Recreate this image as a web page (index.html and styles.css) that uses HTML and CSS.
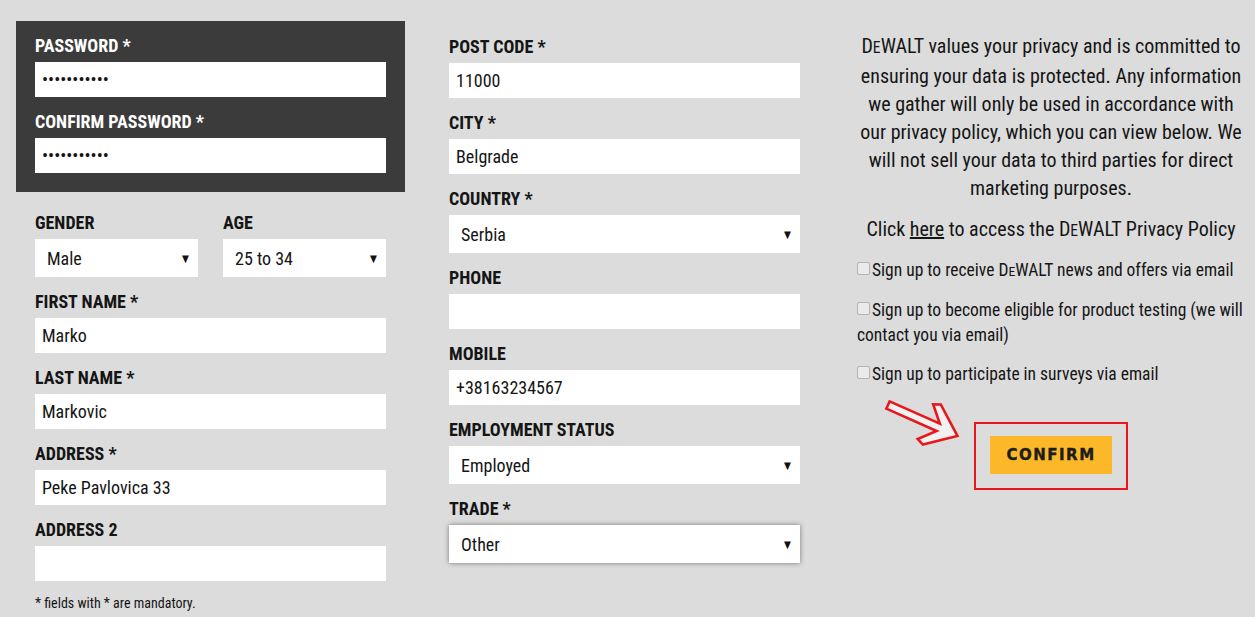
FILE: index.html
```html
<!DOCTYPE html>
<html lang="en">

<head>
    <meta charset="UTF-8">
    <meta name="viewport" content="width=device-width, initial-scale=1.0">
    <title>DEWALT Registration</title>
    <link rel="stylesheet" href="styles.css">
</head>

<body>
    <div class="page">
        <div class="col col-left">
            <div class="secure">
                <div class="field">
                    <label class="label">PASSWORD *</label>
                    <input class="text" type="password" value="marko123456">
                </div>
                <div class="field">
                    <label class="label">CONFIRM PASSWORD *</label>
                    <input class="text" type="password" value="marko123456">
                </div>
            </div>
            <div class="plain">
                <div class="pair">
                    <div class="field">
                        <label class="label">GENDER</label>
                        <div class="select"><span>Male</span><span class="caret">&#9660;</span></div>
                    </div>
                    <div class="field">
                        <label class="label">AGE</label>
                        <div class="select"><span>25 to 34</span><span class="caret">&#9660;</span></div>
                    </div>
                </div>
                <div class="field">
                    <label class="label">FIRST NAME *</label>
                    <input class="text" type="text" value="Marko">
                </div>
                <div class="field">
                    <label class="label">LAST NAME *</label>
                    <input class="text" type="text" value="Markovic">
                </div>
                <div class="field">
                    <label class="label">ADDRESS *</label>
                    <input class="text" type="text" value="Peke Pavlovica 33">
                </div>
                <div class="field">
                    <label class="label">ADDRESS 2</label>
                    <input class="text" type="text" value="">
                </div>
                <p class="note">* fields with * are mandatory.</p>
            </div>
        </div>

        <div class="col col-mid">
            <div class="field">
                <label class="label">POST CODE *</label>
                <input class="text" type="text" value="11000">
            </div>
            <div class="field">
                <label class="label">CITY *</label>
                <input class="text" type="text" value="Belgrade">
            </div>
            <div class="field">
                <label class="label">COUNTRY *</label>
                <div class="select"><span>Serbia</span><span class="caret">&#9660;</span></div>
            </div>
            <div class="field">
                <label class="label">PHONE</label>
                <input class="text" type="text" value="">
            </div>
            <div class="field">
                <label class="label">MOBILE</label>
                <input class="text" type="text" value="+38163234567">
            </div>
            <div class="field">
                <label class="label">EMPLOYMENT STATUS</label>
                <div class="select"><span>Employed</span><span class="caret">&#9660;</span></div>
            </div>
            <div class="field">
                <label class="label">TRADE *</label>
                <div class="select focused"><span>Other</span><span class="caret">&#9660;</span></div>
            </div>
        </div>

        <div class="col col-right">
            <p class="privacy">D<span class="brand-e">E</span>WALT values your privacy and is committed to ensuring your data is
                protected. Any information we gather will only be used in accordance with our privacy policy, which
                you can view below. We will not sell your data to third parties for direct marketing purposes.</p>
            <p class="privacy">Click <a href="#">here</a> to access the D<span class="brand-e">E</span>WALT Privacy Policy</p>
            <p class="optin"><input type="checkbox">Sign up to receive D<span class="brand-e">E</span>WALT news and offers via email</p>
            <p class="optin"><input type="checkbox">Sign up to become eligible for product testing (we will contact you via email)</p>
            <p class="optin"><input type="checkbox">Sign up to participate in surveys via email</p>

            <div class="confirm-wrap">
                <svg class="pointer" width="84" height="56" viewBox="0 0 84 56">
                    <g transform="translate(4 8) rotate(24)">
                        <polygon points="0,-4 55,-4 41,-19 48,-22 76,0 48,22 41,19 55,4 0,4"
                            fill="#f1f1f1" stroke="#e8171b" stroke-width="2.6" stroke-linejoin="miter" />
                    </g>
                </svg>
                <div class="confirm-frame">
                    <button class="confirm">CONFIRM</button>
                </div>
            </div>
        </div>
    </div>
</body>

</html>
```

FILE: styles.css
```css
body {
    margin: 0;
    background-color: #dcdcdc;
    color: #151515;
    font-family: "Roboto Condensed", "Liberation Sans Narrow", "DejaVu Sans Condensed", sans-serif;
    font-stretch: condensed;
}

.page {
    display: flex;
    align-items: flex-start;
    padding: 21px 0 0 16px;
}

.col-left {
    width: 389px;
}

.col-mid {
    width: 351px;
    margin-left: 44px;
    padding-top: 15px;
}

.col-right {
    width: 388px;
    margin-left: 57px;
    padding-top: 11px;
}

/* dark box around the password fields */
.secure {
    background-color: #3b3b3b;
    padding: 14px 19px 5px;
}

.secure .label {
    color: #ffffff;
}

.plain {
    padding: 20px 19px 0;
}

.field {
    margin-bottom: 14px;
}

.label {
    display: block;
    font-size: 18px;
    line-height: 22px;
    font-weight: bold;
    margin-bottom: 5px;
}

.text {
    display: block;
    box-sizing: border-box;
    width: 100%;
    height: 35px;
    padding: 0 7px;
    border: none;
    background-color: #ffffff;
    font-family: inherit;
    font-stretch: inherit;
    font-size: 18px;
    color: #151515;
    outline: none;
}

.pair {
    display: grid;
    grid-template-columns: 163px 163px;
    column-gap: 25px;
}

.select {
    display: flex;
    align-items: center;
    justify-content: space-between;
    height: 38px;
    padding: 0 9px 0 12px;
    background-color: #ffffff;
    font-size: 18px;
}

.select .caret {
    font-size: 10px;
    color: #111;
}

.select.focused {
    box-shadow: 0 0 5px rgba(0, 0, 0, 0.45);
}

.note {
    margin: 0;
    font-size: 14px;
}

/* right column: privacy text and opt-ins */
.col-right p {
    margin: 0 0 13px;
}

.privacy {
    text-align: center;
    font-size: 20px;
    line-height: 28px;
}

.privacy a {
    color: inherit;
}

.brand-e {
    font-size: 0.78em;
}

.optin {
    font-size: 17.5px;
    line-height: 25px;
}

.col-right .optin {
    margin-bottom: 14px;
}

.optin input {
    appearance: none;
    -webkit-appearance: none;
    display: inline-block;
    vertical-align: 1px;
    box-sizing: border-box;
    width: 13px;
    height: 13px;
    margin: 0 2px 0 0;
    border: 1px solid #b4b4b4;
    border-radius: 2px;
    background-color: #ebebeb;
}

.confirm-wrap {
    position: relative;
    display: flex;
    justify-content: center;
    padding-top: 21px;
}

.pointer {
    position: absolute;
    left: 27px;
    top: -4px;
}

.confirm-frame {
    border: 2px solid #e8171b;
    padding: 12px 14px 14px;
}

.confirm {
    display: block;
    width: 122px;
    height: 38px;
    border: none;
    background-color: #fcb829;
    color: #1d1d1d;
    font-family: "DejaVu Sans", sans-serif;
    font-weight: bold;
    font-size: 15px;
    letter-spacing: 1.5px;
    -webkit-text-stroke: 0.4px #1d1d1d;
    cursor: pointer;
}
```
